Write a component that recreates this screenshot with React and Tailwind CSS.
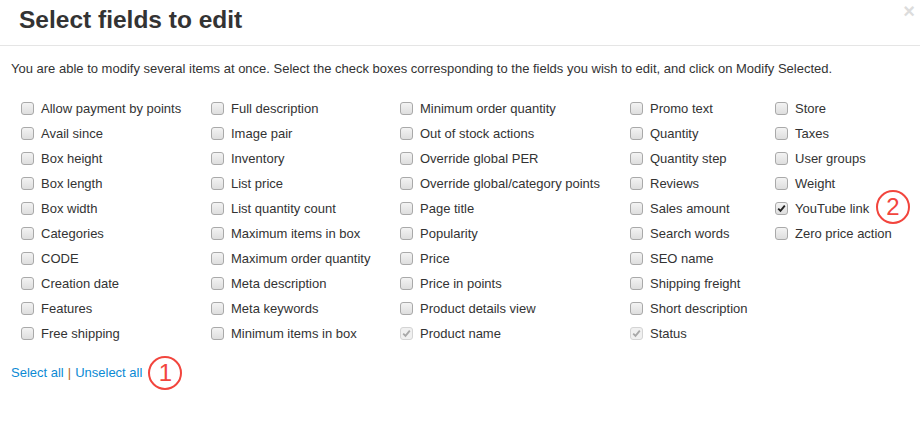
//Imports

//Objects
const columns = [
  [
    "Allow payment by points",
    "Avail since",
    "Box height",
    "Box length",
    "Box width",
    "Categories",
    "CODE",
    "Creation date",
    "Features",
    "Free shipping",
  ],
  [
    "Full description",
    "Image pair",
    "Inventory",
    "List price",
    "List quantity count",
    "Maximum items in box",
    "Maximum order quantity",
    "Meta description",
    "Meta keywords",
    "Minimum items in box",
  ],
  [
    "Minimum order quantity",
    "Out of stock actions",
    "Override global PER",
    "Override global/category points",
    "Page title",
    "Popularity",
    "Price",
    "Price in points",
    "Product details view",
    "Product name",
  ],
  [
    "Promo text",
    "Quantity",
    "Quantity step",
    "Reviews",
    "Sales amount",
    "Search words",
    "SEO name",
    "Shipping freight",
    "Short description",
    "Status",
  ],
  ["Store", "Taxes", "User groups", "Weight", "YouTube link", "Zero price action"],
];

const disabledChecked = ["Product name", "Status"];
const checked = ["YouTube link"];

//Checkbox
const Checkbox = ({ state }) => {
  const isOn = state === "on";
  const isDisabled = state === "disabled";
  return (
    <span
      className={
        "flex items-center justify-center w-[13px] h-[13px] rounded-[3px] border shrink-0 " +
        (isDisabled
          ? "border-[#d4d4d4] bg-[#f0f0f0]"
          : "border-[#a9a9a9] bg-gradient-to-b from-[#f3f3f3] to-[#dedede]")
      }
    >
      {(isOn || isDisabled) && (
        <svg width="9" height="9" viewBox="0 0 9 9">
          <path
            d="M1.2 4.6 L3.5 6.9 L7.8 1.6"
            fill="none"
            stroke={isDisabled ? "#a8a8a8" : "#222"}
            strokeWidth="1.8"
          />
        </svg>
      )}
    </span>
  );
};

//Marker
const Marker = ({ n }) => (
  <span className="inline-flex items-center justify-center w-[34px] h-[34px] rounded-full border-2 border-[#f2453d] text-[#f2453d] text-[24px] font-light leading-none">
    {n}
  </span>
);

//App
const App = () => {
  const stateOf = (name) =>
    checked.includes(name) ? "on" : disabledChecked.includes(name) ? "disabled" : "off";

  return (
    <div
      className="w-[920px] h-[424px] bg-white text-[#333] text-[13px] overflow-hidden relative"
      style={{ fontFamily: '"Liberation Sans", Arial, sans-serif' }}
    >
      <div className="h-[46px] border-b border-[#e5e5e5] pl-[19px] pt-[2px]">
        <h1 className="text-[24.5px] font-bold leading-[36px] text-[#333]">Select fields to edit</h1>
      </div>
      <span className="absolute right-[5px] top-[1px] text-[#dcdcdc] text-[20px] font-bold leading-[20px]">
        ×
      </span>

      <div className="px-[11px] pt-[14px]">
        <p className="leading-[18px]">
          You are able to modify several items at once. Select the check boxes corresponding to
          the fields you wish to edit, and click on Modify Selected.
        </p>

        <div className="grid grid-cols-[190px_189px_230px_145px_1fr] pl-[10px] mt-[18px]">
          {columns.map((col, i) => (
            <div key={i} className="flex flex-col">
              {col.map((name) => (
                <label key={name} className="flex items-center h-[25px] gap-[7px]">
                  <Checkbox state={stateOf(name)} />
                  <span className="relative whitespace-nowrap">
                    {name}
                    {name === "YouTube link" && (
                      <span className="absolute left-[81px] top-[-9px]">
                        <Marker n="2" />
                      </span>
                    )}
                  </span>
                </label>
              ))}
            </div>
          ))}
        </div>

        <div className="flex items-center mt-[10px] h-[34px]">
          <a className="text-[#0b8ad4]">Select all</a>
          <span className="text-[#b5651d] mx-[4px]">|</span>
          <a className="text-[#0b8ad4]">Unselect all</a>
          <span className="ml-[6px]">
            <Marker n="1" />
          </span>
        </div>
      </div>
    </div>
  );
};

export default App;
